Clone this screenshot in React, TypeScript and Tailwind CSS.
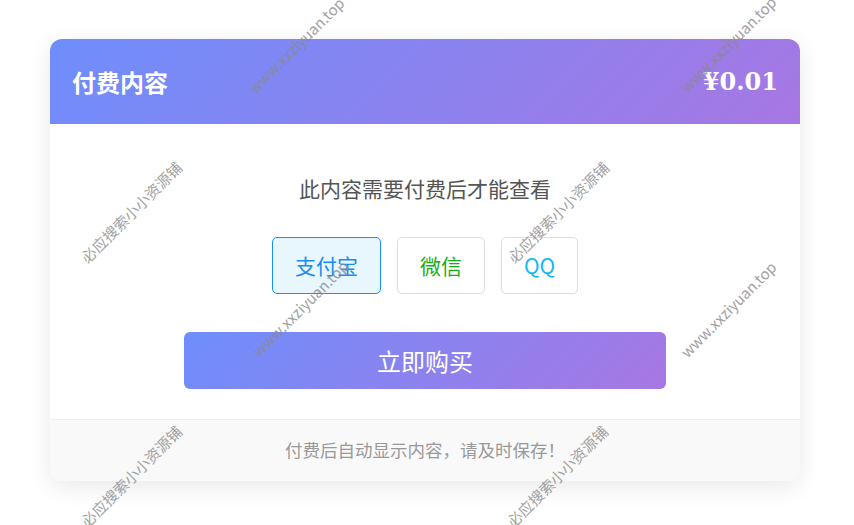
import React from "react";

const cjk = { fontFamily: '"Noto Sans CJK SC", "Noto Sans", sans-serif' };

function Watermark({ x, y, text }: { x: number; y: number; text: string }) {
  return (
    <div
      className="absolute whitespace-nowrap text-[15px] leading-none text-[#8a8a8a] opacity-80 -translate-x-1/2 -translate-y-1/2 -rotate-45 pointer-events-none"
      style={{ left: x, top: y, ...cjk }}
    >
      {text}
    </div>
  );
}

export default function App() {
  const marks = [
    { x: 296, y: 45, t: "www.xxziyuan.top" },
    { x: 728, y: 44, t: "www.xxziyuan.top" },
    { x: 131, y: 212, t: "必应搜索小小资源铺" },
    { x: 558, y: 212, t: "必应搜索小小资源铺" },
    { x: 300, y: 308, t: "www.xxziyuan.top" },
    { x: 728, y: 309, t: "www.xxziyuan.top" },
    { x: 131, y: 476, t: "必应搜索小小资源铺" },
    { x: 557, y: 476, t: "必应搜索小小资源铺" },
  ];
  return (
    <div className="relative w-[854px] h-[525px] overflow-hidden bg-white" style={cjk}>
      <div className="pt-[39px] pl-[50px]">
        <div className="w-[750px] rounded-[12px] overflow-hidden bg-white shadow-[0_6px_24px_rgba(0,0,0,0.09)]">
          <div className="h-[85px] flex items-center justify-between px-[22px] bg-[linear-gradient(135deg,#6e8efb,#a777e3)]">
            <div className="text-white font-bold text-[24px] leading-none">付费内容</div>
            <div
              className="text-white font-bold text-[24px] leading-none"
              style={{ fontFamily: '"DejaVu Serif", "Liberation Serif", serif' }}
            >
              ¥0.01
            </div>
          </div>
          <div className="flex flex-col items-center pt-[48px] pb-[30px]">
            <div className="text-[21px] leading-[32px] text-[#555]">此内容需要付费后才能查看</div>
            <div className="mt-[33px] flex gap-4">
              <div className="h-[57px] px-[22px] flex items-center justify-center rounded-[5px] border border-[#1890ff] bg-[#e8f6fe] text-[#1a8cf0] text-[21px]">
                支付宝
              </div>
              <div className="h-[57px] px-[22px] flex items-center justify-center rounded-[5px] border border-[#dddddd] bg-white text-[#1aad19] text-[21px]">
                微信
              </div>
              <div className="h-[57px] px-[22px] flex items-center justify-center rounded-[5px] border border-[#dddddd] bg-white text-[#12b7f5] text-[21px]">
                QQ
              </div>
            </div>
            <div className="mt-[38px] w-[482px] h-[57px] rounded-[6px] flex items-center justify-center text-white text-[24px] bg-[linear-gradient(135deg,#6e8efb,#a777e3)]">
              立即购买
            </div>
          </div>
          <div className="h-[62px] border-t border-[#eeeeee] bg-[#f9f9f9] flex items-center justify-center text-[17.5px] text-[#999]">
            付费后自动显示内容，请及时保存！
          </div>
        </div>
      </div>
      {marks.map((m, i) => (
        <Watermark key={i} x={m.x} y={m.y} text={m.t} />
      ))}
    </div>
  );
}
